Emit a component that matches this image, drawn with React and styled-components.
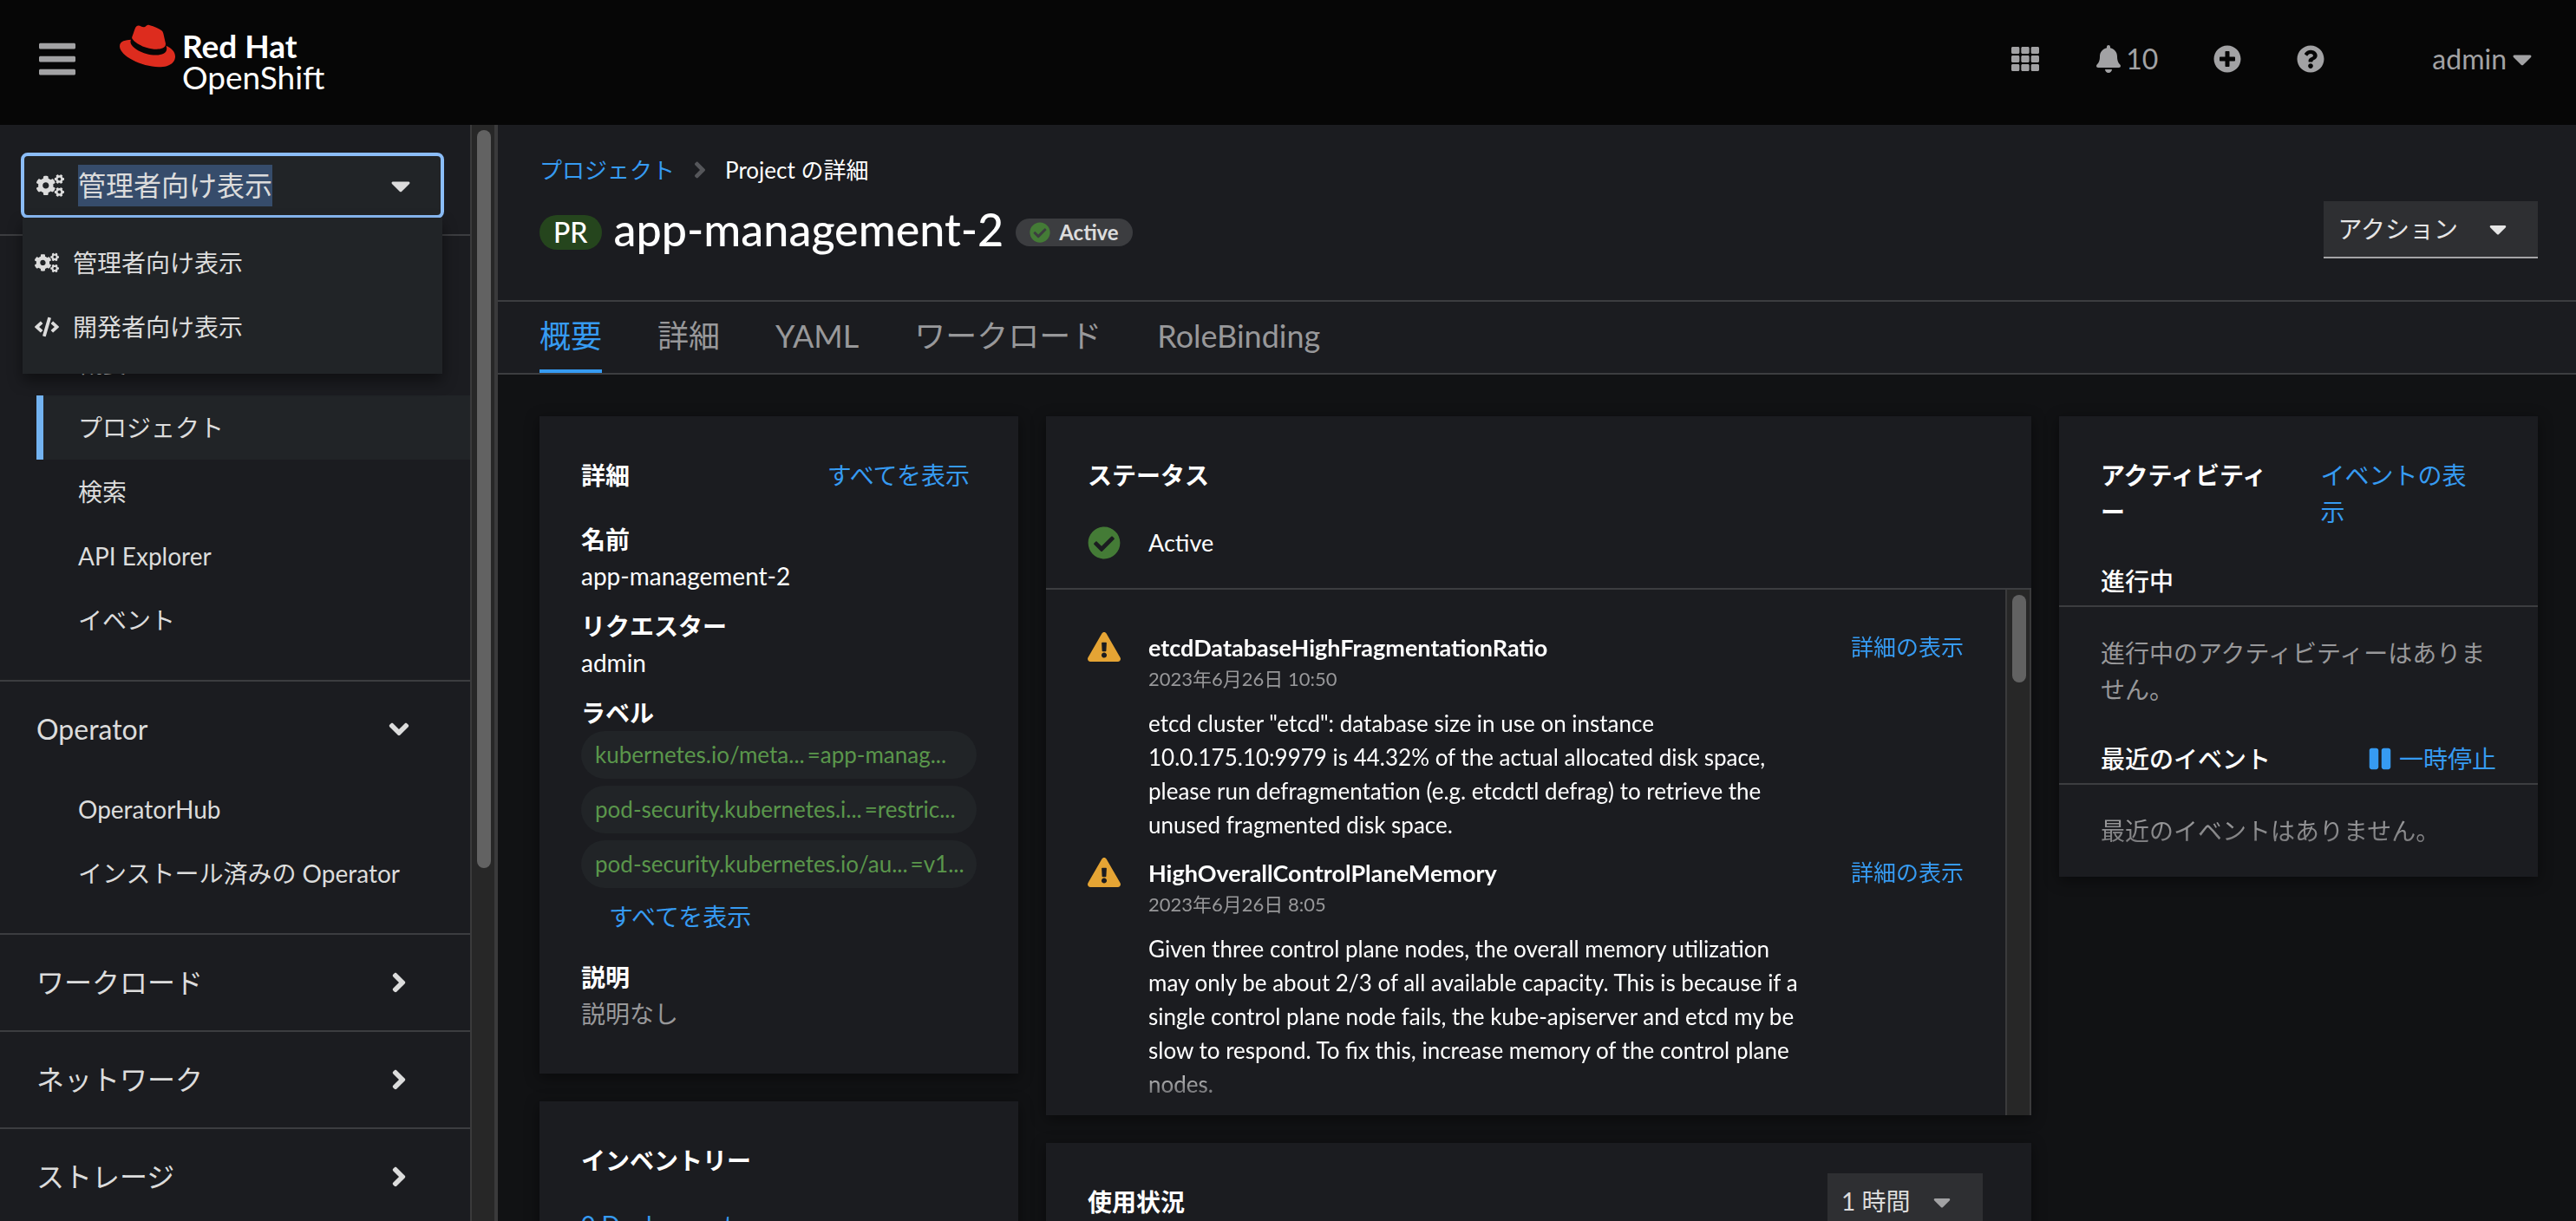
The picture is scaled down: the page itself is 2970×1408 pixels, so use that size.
import React from "react";
import styled, { createGlobalStyle, css } from "styled-components";
import {
  FaAngleDown,
  FaAngleRight,
  FaBars,
  FaBell,
  FaCaretDown,
  FaCheckCircle,
  FaCode,
  FaCogs,
  FaExclamationTriangle,
  FaPause,
  FaPlusCircle,
  FaQuestionCircle,
  FaTh,
} from "react-icons/fa";
import { SiRedhat } from "react-icons/si";

const c = {
  masthead: "#060606",
  page: "#111214",
  panel: "#1b1c20",
  raised: "#212427",
  control: "#2e2f32",
  line: "#3c3d40",
  text: "#ffffff",
  soft: "#dcdcdc",
  muted: "#98989a",
  icon: "#a2a2a4",
  link: "#369bf2",
  green: "#447b36",
  labelGreen: "#5a964b",
  orange: "#e5a434",
};

const GlobalStyle = createGlobalStyle`
  *, *::before, *::after { box-sizing: border-box; }
  body {
    margin: 0;
    background: ${c.page};
    color: ${c.text};
    font-family: Lato, "Noto Sans CJK JP", sans-serif;
    font-size: 28px;
    line-height: 42px;
    line-break: loose;
  }
  h1, h2, h3, p, ul, dl, dd { margin: 0; padding: 0; }
  ul { list-style: none; }
  button, select { font: inherit; color: inherit; background: none; border: 0; padding: 0; margin: 0; cursor: pointer; }
  a { color: ${c.link}; text-decoration: none; }
  svg { display: block; flex: none; }
`;

const Shell = styled.div`
  display: flex;
  flex-direction: column;
  height: 100vh;
  overflow: hidden;
`;

/* Masthead */

const Masthead = styled.header`
  display: flex;
  align-items: center;
  flex: none;
  height: 144px;
  padding: 0 44px 8px 42px;
  background: ${c.masthead};
  color: ${c.icon};
`;

const IconButton = styled.button`
  display: flex;
  align-items: center;
  gap: 4px;
  font-size: 32px;
  line-height: 48px;
`;

const Brand = styled.a`
  display: flex;
  align-items: flex-start;
  gap: 8px;
  margin-left: 48px;
  color: ${c.text};
  font-size: 37px;
  line-height: 36px;
`;

const Hat = styled(SiRedhat)`
  margin-top: -8px;
  color: #dd2c1e;
`;

const BrandText = styled.span`
  display: flex;
  flex-direction: column;
  padding-top: 6px;
`;

const Tools = styled.div`
  display: flex;
  align-items: center;
  gap: 64px;
  margin-left: auto;
`;

const UserButton = styled(IconButton)`
  gap: 0;
  margin-left: 60px;
`;

const Columns = styled.div`
  display: flex;
  flex: 1;
  min-height: 0;
`;

/* Scroll bars */

const Track = styled.div`
  flex: none;
  width: ${(p) => (p.$wide ? 32 : 30)}px;
  padding: 6px 4px 6px 6px;
  background: #272727;
  border: solid #3a3a3b;
  border-width: 0 ${(p) => (p.$wide ? 4 : 2)}px 0 2px;
`;

const Thumb = styled.div`
  width: 16px;
  height: ${(p) => p.$share}%;
  border-radius: 8px;
  background: #626262;
`;

/* Sidebar */

const Sidebar = styled.nav`
  display: flex;
  flex: none;
  width: 574px;
  background: ${c.panel};
  color: ${c.soft};
`;

const SidebarBody = styled.div`
  flex: 1;
  min-width: 0;
  overflow: hidden;
`;

const Perspective = styled.div`
  position: relative;
  padding: 32px 30px 18px 24px;
  border-bottom: 2px solid ${c.line};
`;

const PerspectiveToggle = styled.button`
  display: flex;
  align-items: center;
  gap: 16px;
  width: 100%;
  height: 76px;
  padding: 0 28px 0 14px;
  border: 4px solid #8bbdf8;
  border-radius: 8px;
  background: ${c.raised};
  font-size: 32px;
  line-height: 48px;

  svg:last-child { margin-left: auto; }
`;

const Selected = styled.span`
  background: #364c6b;
`;

const PerspectiveMenu = styled.ul`
  position: absolute;
  z-index: 2;
  top: 107px;
  left: 26px;
  right: 32px;
  padding: 15px 0 17px;
  background: ${c.raised};
  box-shadow: 0 8px 16px rgba(0, 0, 0, 0.45);
`;

const PerspectiveOption = styled.button`
  display: flex;
  align-items: center;
  gap: 16px;
  width: 100%;
  height: 74px;
  padding: 0 14px;
`;

const Section = styled.section`
  border-bottom: 2px solid ${c.line};
`;

const SectionToggle = styled.button`
  display: flex;
  align-items: center;
  justify-content: space-between;
  width: 100%;
  height: 110px;
  padding: 0 64px 0 42px;
  font-size: 32px;
  line-height: 48px;
`;

const SectionList = styled.ul`
  padding-bottom: 32px;
`;

const NavLink = styled.a`
  display: flex;
  align-items: center;
  height: 74px;
  margin-left: 42px;
  padding-left: 40px;
  border-left: 8px solid transparent;
  color: ${c.soft};
  ${(p) =>
    p.$current &&
    css`
      background: ${c.raised};
      border-left-color: #73b3f1;
    `}
`;

/* Main */

const Main = styled.main`
  display: flex;
  flex-direction: column;
  flex: 1;
  min-width: 0;
  overflow: hidden;
`;

const PageHead = styled.div`
  display: flex;
  flex: none;
  align-items: flex-end;
  justify-content: space-between;
  height: 204px;
  padding: 0 44px 48px 48px;
  background: ${c.panel};
  border-bottom: 2px solid ${c.line};
`;

const Breadcrumb = styled.ol`
  display: flex;
  align-items: center;
  gap: 14px;
  margin: 0 0 22px;
  padding: 0;
  list-style: none;
  font-size: 26px;
  line-height: 40px;

  svg { color: #55565a; }
  li { display: flex; align-items: center; gap: 14px; }
`;

const Heading = styled.div`
  display: flex;
  align-items: center;
  gap: 14px;
`;

const KindBadge = styled.abbr`
  padding: 0 16px;
  border-radius: 20px;
  background: #25451d;
  font-size: 32px;
  font-weight: 500;
  line-height: 40px;
`;

const Title = styled.h1`
  padding-bottom: 8px;
  font-size: 52px;
  font-weight: 500;
  line-height: 52px;
`;

const StatusLabel = styled.span`
  display: flex;
  align-items: center;
  gap: 10px;
  height: 32px;
  padding: 0 16px;
  border-radius: 16px;
  background: ${c.line};
  color: ${c.soft};
  font-size: 24px;
  font-weight: 700;
  line-height: 32px;

  svg { color: ${c.green}; }
`;

const ActionButton = styled.button`
  display: flex;
  align-items: center;
  gap: 30px;
  height: 66px;
  padding: 0 30px 0 16px;
  background: ${c.control};
  border-bottom: 2px solid #a4a4a6;
  color: #e6e6e6;
`;

const Tabs = styled.div`
  display: flex;
  flex: none;
  gap: 64px;
  height: 84px;
  padding: 0 48px;
  background: ${c.panel};
  border-bottom: 2px solid ${c.line};
`;

const Tab = styled.a`
  display: flex;
  align-items: center;
  border-bottom: 4px solid ${(p) => (p.$current ? c.link : "transparent")};
  color: ${(p) => (p.$current ? c.link : c.muted)};
  font-size: 36px;
  line-height: 54px;
`;

const Dashboard = styled.div`
  display: grid;
  grid-template-columns: repeat(12, minmax(0, 1fr));
  gap: 32px;
  align-items: start;
  padding: 48px 44px 48px 48px;
`;

const Column = styled.div`
  display: flex;
  flex-direction: column;
  gap: 32px;
  grid-column: span ${(p) => p.$span};
`;

const Card = styled.article`
  background: ${c.panel};
  box-shadow: 0 4px 16px rgba(0, 0, 0, 0.45);
`;

const CardHead = styled.div`
  display: flex;
  align-items: flex-start;
  justify-content: space-between;
  gap: 36px;
  padding: 47px 56px 32px 48px;
`;

const CardTitle = styled.h2`
  font-size: 28px;
  font-weight: 700;
  line-height: 42px;
`;

const CardBody = styled.div`
  padding: 0 48px 48px;
`;

const Details = styled.dl`
  display: flex;
  flex-direction: column;
  gap: 16px;

  dt { font-weight: 700; }
`;

const Muted = styled.span`
  color: ${c.muted};
`;

const Labels = styled.ul`
  display: flex;
  flex-direction: column;
  gap: 8px;
`;

const Label = styled.li`
  height: 55px;
  padding: 0 16px;
  border-radius: 28px;
  background: ${c.raised};
  color: ${c.labelGreen};
  font-size: 26px;
  line-height: 55px;
  white-space: nowrap;
  overflow: hidden;
`;

const LabelValue = styled.span`
  margin-left: 3px;
`;

const LinkButton = styled.button`
  display: flex;
  align-items: center;
  gap: 8px;
  color: ${c.link};
`;

const ShowAll = styled(LinkButton)`
  padding: 12px 32px;
`;

const Health = styled.div`
  display: flex;
  align-items: center;
  gap: 32px;
  padding: 4px 48px 31px;
  font-size: 27px;

  svg { color: ${c.green}; }
`;

const AlertPane = styled.div`
  display: flex;
  height: 608px;
  border-top: 2px solid ${c.line};
`;

const AlertList = styled.ul`
  flex: 1;
  min-width: 0;
  padding: 47px 48px 0;
  overflow: hidden;
  mask-image: linear-gradient(#000 calc(100% - 64px), transparent);
`;

const Alert = styled.li`
  display: flex;
  align-items: flex-start;
  gap: 32px;
  margin-bottom: 16px;
  font-size: 26px;
  line-height: 39px;

  > svg { color: ${c.orange}; }
  > a { flex: none; margin-left: 16px; }
`;

const AlertText = styled.div`
  flex: 1;
  min-width: 0;
`;

const AlertTitle = styled.h3`
  font-size: 27px;
  font-weight: 700;
  line-height: 39px;
`;

const AlertTime = styled.time`
  display: block;
  margin-bottom: 16px;
  color: ${c.muted};
  font-size: 22px;
  line-height: 33px;
`;

const SelectBox = styled.label`
  position: relative;
  margin: -12px 0;

  svg {
    position: absolute;
    top: 17px;
    right: 31px;
    color: ${c.icon};
    pointer-events: none;
  }
`;

const Select = styled.select`
  appearance: none;
  width: 179px;
  height: 66px;
  padding: 0 16px;
  border-radius: 0;
  border-bottom: 2px solid #a4a4a6;
  background: ${c.control};
  color: ${c.soft};
`;

const SubHead = styled.div`
  display: flex;
  justify-content: space-between;
  padding: 6px 48px 7px;
  border-bottom: 2px solid ${c.line};
`;

const SubTitle = styled.h3`
  font-size: 28px;
  font-weight: 500;
  line-height: 42px;
`;

const Empty = styled.p`
  padding: 32px 56px 32px 48px;
  color: ${c.muted};
  ${(p) => p.$fade && css`mask-image: linear-gradient(#000 40%, rgba(0, 0, 0, 0.4));`}
`;

const home = ["概要", "プロジェクト", "検索", "API Explorer", "イベント"];
const operators = ["OperatorHub", "インストール済みの Operator"];
const collapsed = ["ワークロード", "ネットワーク", "ストレージ"];
const tabs = ["概要", "詳細", "YAML", "ワークロード", "RoleBinding"];
const labels = [
  ["kubernetes.io/meta...", "=app-manag..."],
  ["pod-security.kubernetes.i...", "=restric..."],
  ["pod-security.kubernetes.io/au...", "=v1..."],
];
const alerts = [
  {
    name: "etcdDatabaseHighFragmentationRatio",
    time: "2023年6月26日 10:50",
    text:
      'etcd cluster "etcd": database size in use on instance 10.0.175.10:9979 is 44.32% of the actual allocated disk space, please run defragmentation (e.g. etcdctl defrag) to retrieve the unused fragmented disk space.',
  },
  {
    name: "HighOverallControlPlaneMemory",
    time: "2023年6月26日 8:05",
    text:
      "Given three control plane nodes, the overall memory utilization may only be about 2/3 of all available capacity. This is because if a single control plane node fails, the kube-apiserver and etcd my be slow to respond. To fix this, increase memory of the control plane nodes.",
  },
];

function NavSection({ title, items, current }) {
  return (
    <Section>
      <SectionToggle type="button" aria-expanded={Boolean(items)}>
        {title}
        {items ? <FaAngleDown size={36} /> : <FaAngleRight size={36} />}
      </SectionToggle>
      {items && (
        <SectionList>
          {items.map((item) => (
            <li key={item}>
              <NavLink href="#" $current={item === current}>
                {item}
              </NavLink>
            </li>
          ))}
        </SectionList>
      )}
    </Section>
  );
}

export default function App() {
  return (
    <Shell lang="ja">
      <GlobalStyle />
      <Masthead>
        <IconButton type="button" aria-label="メニュー">
          <FaBars size={48} />
        </IconButton>
        <Brand href="#">
          <Hat size={64} />
          <BrandText>
            <b>Red Hat</b>
            <span>OpenShift</span>
          </BrandText>
        </Brand>
        <Tools>
          <IconButton type="button" aria-label="アプリケーション">
            <FaTh size={32} />
          </IconButton>
          <IconButton type="button" aria-label="通知">
            <FaBell size={32} />
            10
          </IconButton>
          <IconButton type="button" aria-label="追加">
            <FaPlusCircle size={32} />
          </IconButton>
          <IconButton type="button" aria-label="ヘルプ">
            <FaQuestionCircle size={32} />
          </IconButton>
          <UserButton type="button">
            admin
            <FaCaretDown size={36} />
          </UserButton>
        </Tools>
      </Masthead>

      <Columns>
        <Sidebar>
          <SidebarBody>
            <Perspective>
              <PerspectiveToggle type="button" aria-expanded="true">
                <FaCogs size={32} />
                <Selected>管理者向け表示</Selected>
                <FaCaretDown size={36} />
              </PerspectiveToggle>
              <PerspectiveMenu>
                <li>
                  <PerspectiveOption type="button">
                    <FaCogs size={28} />
                    管理者向け表示
                  </PerspectiveOption>
                </li>
                <li>
                  <PerspectiveOption type="button">
                    <FaCode size={28} />
                    開発者向け表示
                  </PerspectiveOption>
                </li>
              </PerspectiveMenu>
            </Perspective>
            <NavSection title="ホーム" items={home} current="プロジェクト" />
            <NavSection title="Operator" items={operators} />
            {collapsed.map((title) => (
              <NavSection key={title} title={title} />
            ))}
          </SidebarBody>
          <Track $wide aria-hidden="true">
            <Thumb $share={68} />
          </Track>
        </Sidebar>

        <Main>
          <PageHead>
            <div>
              <Breadcrumb>
                <li>
                  <a href="#">プロジェクト</a>
                  <FaAngleRight size={30} />
                </li>
                <li>Project の詳細</li>
              </Breadcrumb>
              <Heading>
                <KindBadge>PR</KindBadge>
                <Title>app-management-2</Title>
                <StatusLabel>
                  <FaCheckCircle size={24} />
                  Active
                </StatusLabel>
              </Heading>
            </div>
            <ActionButton type="button">
              アクション
              <FaCaretDown size={32} />
            </ActionButton>
          </PageHead>

          <Tabs>
            {tabs.map((tab, i) => (
              <Tab key={tab} href="#" $current={i === 0}>
                {tab}
              </Tab>
            ))}
          </Tabs>

          <Dashboard>
            <Column $span={3}>
              <Card>
                <CardHead>
                  <CardTitle>詳細</CardTitle>
                  <a href="#">すべてを表示</a>
                </CardHead>
                <CardBody>
                  <Details>
                    <div>
                      <dt>名前</dt>
                      <dd>app-management-2</dd>
                    </div>
                    <div>
                      <dt>リクエスター</dt>
                      <dd>admin</dd>
                    </div>
                    <div>
                      <dt>ラベル</dt>
                      <dd>
                        <Labels>
                          {labels.map(([key, value]) => (
                            <Label key={key}>
                              <span>{key}</span>
                              <LabelValue>{value}</LabelValue>
                            </Label>
                          ))}
                        </Labels>
                        <ShowAll type="button">すべてを表示</ShowAll>
                      </dd>
                    </div>
                    <div>
                      <dt>説明</dt>
                      <dd>
                        <Muted>説明なし</Muted>
                      </dd>
                    </div>
                  </Details>
                </CardBody>
              </Card>
              <Card>
                <CardHead>
                  <CardTitle>インベントリー</CardTitle>
                </CardHead>
                <CardBody>
                  <a href="#">0 Deployments</a>
                </CardBody>
              </Card>
            </Column>

            <Column $span={6}>
              <Card>
                <CardHead>
                  <CardTitle>ステータス</CardTitle>
                </CardHead>
                <Health>
                  <FaCheckCircle size={38} />
                  Active
                </Health>
                <AlertPane>
                  <AlertList>
                    {alerts.map((alert) => (
                      <Alert key={alert.name}>
                        <FaExclamationTriangle size={38} />
                        <AlertText>
                          <AlertTitle>{alert.name}</AlertTitle>
                          <AlertTime>{alert.time}</AlertTime>
                          <p>{alert.text}</p>
                        </AlertText>
                        <a href="#">詳細の表示</a>
                      </Alert>
                    ))}
                  </AlertList>
                  <Track aria-hidden="true">
                    <Thumb $share={17} />
                  </Track>
                </AlertPane>
              </Card>
              <Card>
                <CardHead>
                  <CardTitle>使用状況</CardTitle>
                  <SelectBox>
                    <Select aria-label="期間" defaultValue="1">
                      <option value="1">1 時間</option>
                    </Select>
                    <FaCaretDown size={32} />
                  </SelectBox>
                </CardHead>
              </Card>
            </Column>

            <Column $span={3}>
              <Card>
                <CardHead>
                  <CardTitle>アクティビティー</CardTitle>
                  <a href="#">イベントの表示</a>
                </CardHead>
                <SubHead>
                  <SubTitle>進行中</SubTitle>
                </SubHead>
                <Empty>進行中のアクティビティーはありません。</Empty>
                <SubHead>
                  <SubTitle>最近のイベント</SubTitle>
                  <LinkButton type="button">
                    <FaPause size={28} />
                    一時停止
                  </LinkButton>
                </SubHead>
                <Empty $fade>最近のイベントはありません。</Empty>
              </Card>
            </Column>
          </Dashboard>
        </Main>
      </Columns>
    </Shell>
  );
}
